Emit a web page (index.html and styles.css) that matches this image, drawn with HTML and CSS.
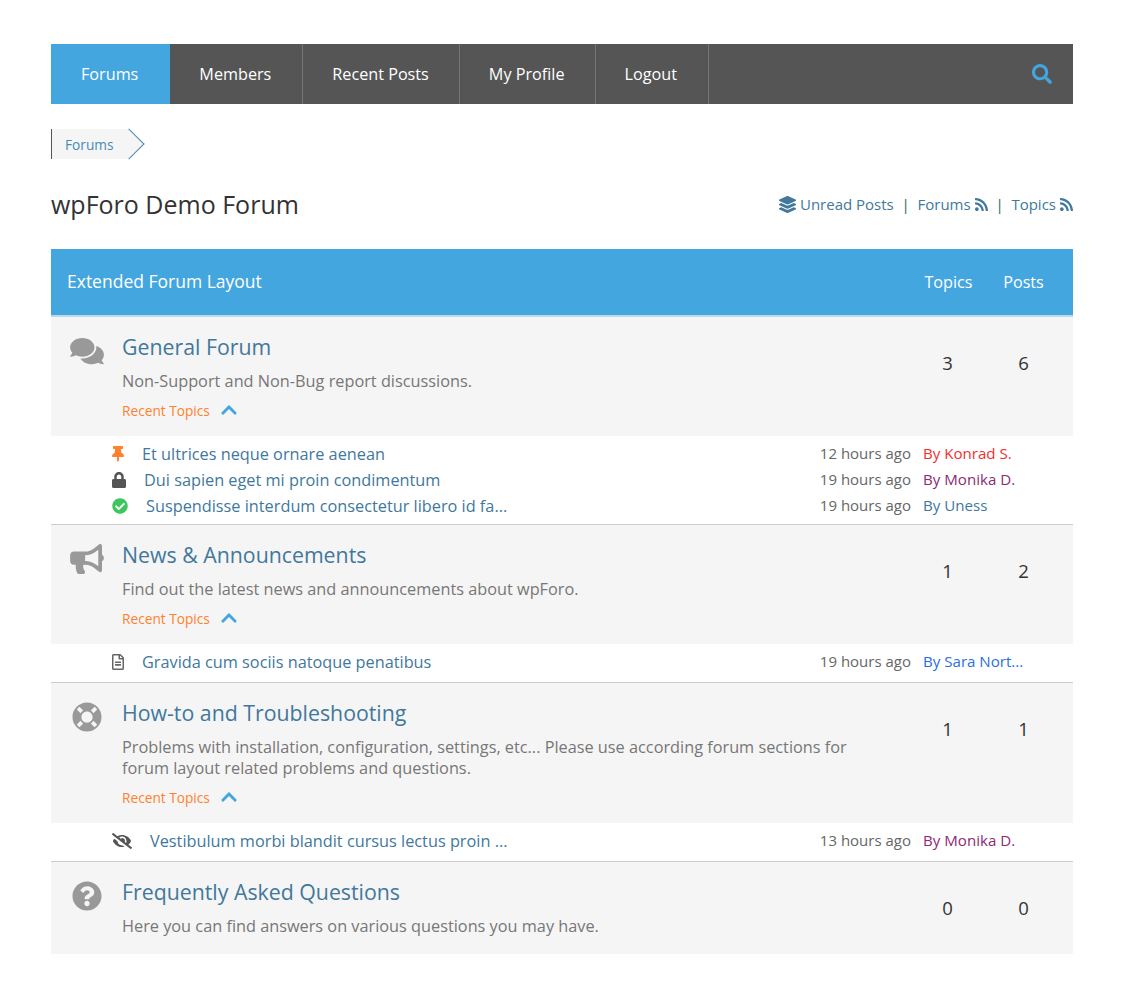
FILE: index.html
```html
<!DOCTYPE html>
<html lang="en">
<head>
    <meta charset="UTF-8">
    <meta name="viewport" content="width=device-width, initial-scale=1.0">
    <title>wpForo Demo Forum</title>
    <link rel="stylesheet" href="styles.css">
</head>
<body>
    <svg class="icon-defs" xmlns="http://www.w3.org/2000/svg">
        <symbol id="i-search" viewBox="0 0 512 512"><path d="M505 442.7L405.3 343c-4.5-4.5-10.6-7-17-7H372c27.6-35.3 44-79.7 44-128C416 93.1 322.9 0 208 0S0 93.1 0 208s93.1 208 208 208c48.3 0 92.7-16.4 128-44v16.3c0 6.4 2.5 12.5 7 17l99.7 99.7c9.4 9.4 24.6 9.4 33.9 0l28.3-28.3c9.4-9.4 9.4-24.6.1-34zM208 336c-70.7 0-128-57.2-128-128 0-70.7 57.2-128 128-128 70.7 0 128 57.2 128 128 0 70.7-57.2 128-128 128z"/></symbol>
        <symbol id="i-layers" viewBox="0 0 512 512"><path d="M12.41 148.02l232.94 105.67c6.8 3.09 14.49 3.09 21.29 0l232.94-105.67c16.55-7.51 16.55-32.52 0-40.03L266.65 2.31a25.607 25.607 0 0 0-21.29 0L12.41 107.98c-16.55 7.51-16.55 32.53 0 40.04zm487.18 88.28l-58.09-26.33-161.64 73.27c-7.56 3.43-15.59 5.17-23.86 5.17s-16.29-1.74-23.86-5.17L70.51 209.97l-58.1 26.33c-16.55 7.5-16.55 32.5 0 40l232.94 105.59c6.8 3.08 14.49 3.08 21.29 0L499.59 276.3c16.55-7.5 16.55-32.5 0-40zm0 127.8l-57.87-26.23-161.86 73.37c-7.56 3.43-15.59 5.17-23.86 5.17s-16.29-1.74-23.86-5.17L70.29 337.87 12.41 364.1c-16.55 7.5-16.55 32.5 0 40l232.94 105.59c6.8 3.08 14.49 3.08 21.29 0L499.59 404.1c16.55-7.5 16.55-32.5 0-40z"/></symbol>
        <symbol id="i-rss" viewBox="0 0 448 512"><path d="M128.081 415.959c0 35.369-28.672 64.041-64.041 64.041S0 451.328 0 415.959s28.672-64.041 64.041-64.041 64.04 28.673 64.04 64.041zm175.66 47.25c-8.354-154.6-132.185-278.587-286.95-286.95C7.656 175.765 0 183.105 0 192.253v48.069c0 8.415 6.49 15.472 14.887 16.018 111.832 7.284 201.473 96.702 208.772 208.772.547 8.397 7.604 14.887 16.018 14.887h48.069c9.149.001 16.489-7.655 15.995-16.79zm144.249.288C439.596 229.677 251.465 40.445 16.503 32.01 7.473 31.686 0 38.981 0 48.016v48.068c0 8.625 6.835 15.645 15.453 15.999 191.179 7.839 344.627 161.316 352.465 352.465.353 8.618 7.373 15.453 15.999 15.453h48.068c9.034-.001 16.329-7.474 16.005-16.504z"/></symbol>
        <symbol id="i-comments" viewBox="0 0 576 512"><path d="M416 192c0-88.4-93.1-160-208-160S0 103.6 0 192c0 34.3 14.1 65.9 38 92-13.4 30.2-35.5 54.2-35.8 54.5-2.2 2.3-2.8 5.7-1.5 8.7S4.8 352 8 352c36.6 0 66.9-12.3 88.7-25 32.2 15.7 70.3 25 111.3 25 114.9 0 208-71.6 208-160zm122 220c23.9-26 38-57.7 38-92 0-66.9-53.5-124.2-129.3-148.1.9 6.6 1.3 13.3 1.3 20.1 0 105.9-107.7 192-240 192-10.8 0-21.3-.8-31.7-1.9C207.8 439.6 281.8 480 368 480c41 0 79.1-9.2 111.3-25 21.8 12.7 52.1 25 88.7 25 3.2 0 6.1-1.9 7.3-4.8 1.3-2.9.7-6.3-1.5-8.7-.3-.3-22.4-24.2-35.8-54.5z"/></symbol>
        <symbol id="i-bullhorn" viewBox="0 0 576 512"><path d="M576 240c0-23.63-12.95-44.04-32-55.12V32.01C544 23.26 537.02 0 512 0c-7.12 0-14.19 2.38-19.98 7.02l-85.03 68.03C364.28 109.19 310.66 128 256 128H64c-35.35 0-64 28.65-64 64v96c0 35.35 28.65 64 64 64h33.7c-1.39 10.48-2.18 21.14-2.18 32 0 39.77 9.26 77.35 25.56 110.94 5.19 10.69 16.52 17.06 28.4 17.06h74.28c26.05 0 41.69-29.84 25.9-50.56-16.4-21.52-26.15-48.36-26.15-77.44 0-11.11 1.62-21.79 4.41-32H256c54.66 0 108.28 18.81 150.98 52.95l85.03 68.03a32.023 32.023 0 0 0 19.98 7.02c24.92 0 32-22.78 32-32V295.13C563.05 284.04 576 263.63 576 240zm-96 141.42l-33.05-26.44C392.95 311.78 325.12 288 256 288v-96c69.12 0 136.95-23.78 190.95-66.98L480 98.58v282.84z"/></symbol>
        <symbol id="i-lifering" viewBox="0 0 512 512"><path d="M256 8C119.033 8 8 119.033 8 256s111.033 248 248 248 248-111.033 248-248S392.967 8 256 8zm173.696 119.559l-63.399 63.399c-10.987-18.559-26.67-34.252-45.255-45.255l63.399-63.399a218.396 218.396 0 0 1 45.255 45.255zM256 352c-53.019 0-96-42.981-96-96s42.981-96 96-96 96 42.981 96 96-42.981 96-96 96zM127.559 82.304l63.399 63.399c-18.559 10.987-34.252 26.67-45.255 45.255l-63.399-63.399a218.372 218.372 0 0 1 45.255-45.255zM82.304 384.441l63.399-63.399c10.987 18.559 26.67 34.252 45.255 45.255l-63.399 63.399a218.396 218.396 0 0 1-45.255-45.255zm302.137 45.255l-63.399-63.399c18.559-10.987 34.252-26.67 45.255-45.255l63.399 63.399a218.403 218.403 0 0 1-45.255 45.255z"/></symbol>
        <symbol id="i-question" viewBox="0 0 512 512"><path d="M504 256c0 136.997-111.043 248-248 248S8 392.997 8 256C8 119.083 119.043 8 256 8s248 111.083 248 248zM262.655 90c-54.497 0-89.255 22.957-116.549 63.758-3.536 5.286-2.353 12.415 2.715 16.258l34.699 26.31c5.205 3.947 12.621 3.008 16.665-2.122 17.864-22.658 30.113-35.797 57.303-35.797 20.429 0 45.698 13.148 45.698 32.958 0 14.976-12.363 22.667-32.534 33.976C247.128 238.528 216 254.941 216 296v4c0 6.627 5.373 12 12 12h56c6.627 0 12-5.373 12-12v-1.333c0-28.462 83.186-29.647 83.186-106.667 0-58.002-60.165-102-116.531-102zM256 338c-25.365 0-46 20.635-46 46 0 25.364 20.635 46 46 46s46-20.636 46-46c0-25.365-20.635-46-46-46z"/></symbol>
        <symbol id="i-chevron" viewBox="0 0 448 512"><path d="M240.971 130.524l194.343 194.343c9.373 9.373 9.373 24.569 0 33.941l-22.667 22.667c-9.357 9.357-24.522 9.375-33.901.04L224 227.495 69.255 381.516c-9.379 9.335-24.544 9.317-33.901-.04l-22.667-22.667c-9.373-9.373-9.373-24.569 0-33.941L207.03 130.525c9.372-9.373 24.568-9.373 33.941-.001z"/></symbol>
        <symbol id="i-pin" viewBox="0 0 384 512"><path d="M298.028 214.267L285.793 96H328c13.255 0 24-10.745 24-24V24c0-13.255-10.745-24-24-24H56C42.745 0 32 10.745 32 24v48c0 13.255 10.745 24 24 24h42.207L85.972 214.267C37.465 236.82 0 277.261 0 328c0 13.255 10.745 24 24 24h136v104.007c0 1.242.289 2.467.845 3.578l24 48c2.941 5.882 11.364 5.893 14.311 0l24-48a8.008 8.008 0 0 0 .845-3.578V352h136c13.255 0 24-10.745 24-24-.001-51.183-37.983-91.42-85.973-113.733z"/></symbol>
        <symbol id="i-lock" viewBox="0 0 448 512"><path d="M400 224h-24v-72C376 68.2 307.8 0 224 0S72 68.2 72 152v72H48c-26.5 0-48 21.5-48 48v192c0 26.5 21.5 48 48 48h352c26.5 0 48-21.5 48-48V272c0-26.5-21.5-48-48-48zm-104 0H152v-72c0-39.7 32.3-72 72-72s72 32.3 72 72v72z"/></symbol>
        <symbol id="i-check" viewBox="0 0 512 512"><path d="M504 256c0 136.967-111.033 248-248 248S8 392.967 8 256 119.033 8 256 8s248 111.033 248 248zM227.314 387.314l184-184c6.248-6.248 6.248-16.379 0-22.627l-22.627-22.627c-6.248-6.249-16.379-6.249-22.628 0L216 308.118l-70.059-70.059c-6.248-6.248-16.379-6.248-22.628 0l-22.627 22.627c-6.248 6.248-6.248 16.379 0 22.627l104 104c6.249 6.249 16.379 6.249 22.628.001z"/></symbol>
        <symbol id="i-file" viewBox="0 0 384 512"><path d="M288 248v28c0 6.6-5.4 12-12 12H108c-6.6 0-12-5.4-12-12v-28c0-6.6 5.4-12 12-12h168c6.6 0 12 5.4 12 12zm-12 72H108c-6.6 0-12 5.4-12 12v28c0 6.6 5.4 12 12 12h168c6.6 0 12-5.4 12-12v-28c0-6.6-5.4-12-12-12zm108-188.1V464c0 26.5-21.5 48-48 48H48c-26.5 0-48-21.5-48-48V48C0 21.5 21.5 0 48 0h204.1C264.8 0 277 5.1 286 14.1L369.9 98c9 8.9 14.1 21.2 14.1 33.9zm-128-80V128h76.1L256 51.9zM336 464V176H232c-13.3 0-24-10.7-24-24V48H48v416h288z"/></symbol>
        <symbol id="i-eyeslash" viewBox="0 0 640 512"><path d="M320 400c-75.85 0-137.25-58.71-142.9-133.11L72.2 185.82c-13.79 17.3-26.48 35.59-36.72 55.59a32.35 32.35 0 0 0 0 29.19C89.71 376.41 197.07 448 320 448c26.91 0 52.87-4 77.89-10.46L346 397.39a144.13 144.13 0 0 1-26 2.61zm313.82 58.1l-110.55-85.44a331.25 331.25 0 0 0 81.25-102.07 32.35 32.35 0 0 0 0-29.19C550.29 135.59 442.93 64 320 64a308.15 308.15 0 0 0-147.32 37.7L45.46 3.37A16 16 0 0 0 23 6.18L3.37 31.45A16 16 0 0 0 6.18 53.9l588.36 454.73a16 16 0 0 0 22.46-2.81l19.64-25.27a16 16 0 0 0-2.82-22.45zm-183.72-142l-39.3-30.38A94.75 94.75 0 0 0 416 256a94.76 94.76 0 0 0-121.31-92.21A47.65 47.65 0 0 1 304 192a46.64 46.64 0 0 1-1.54 10l-73.61-56.89A142.31 142.31 0 0 1 320 112a143.92 143.92 0 0 1 144 144c0 21.63-5.29 41.79-13.9 60.11z"/></symbol>
    </svg>

    <div class="wrap">
        <nav class="menu">
            <a class="menu-item active" href="#">Forums</a>
            <a class="menu-item" href="#">Members</a>
            <a class="menu-item" href="#">Recent Posts</a>
            <a class="menu-item" href="#">My Profile</a>
            <a class="menu-item" href="#">Logout</a>
            <a class="menu-search" href="#"><svg class="ic"><use href="#i-search"/></svg></a>
        </nav>

        <div class="breadcrumb"><a href="#">Forums</a></div>

        <div class="page-head">
            <h1>wpForo Demo Forum</h1>
            <div class="feeds">
                <a href="#"><svg class="ic ic-layers"><use href="#i-layers"/></svg> Unread Posts</a>
                <span class="sep">|</span>
                <a href="#">Forums <svg class="ic ic-rss"><use href="#i-rss"/></svg></a>
                <span class="sep">|</span>
                <a href="#">Topics <svg class="ic ic-rss"><use href="#i-rss"/></svg></a>
            </div>
        </div>

        <div class="cat-head">
            <div class="cat-title">Extended Forum Layout</div>
            <div class="stat">Topics</div>
            <div class="stat">Posts</div>
        </div>

        <!-- General Forum -->
        <div class="forum">
            <svg class="ic forum-icon"><use href="#i-comments"/></svg>
            <div class="forum-body">
                <h3><a href="#">General Forum</a></h3>
                <p>Non-Support and Non-Bug report discussions.</p>
                <div class="recent">Recent Topics <svg class="ic"><use href="#i-chevron"/></svg></div>
            </div>
            <div class="stat">3</div>
            <div class="stat">6</div>
        </div>
        <ul class="topics">
            <li>
                <svg class="ic t-pin"><use href="#i-pin"/></svg>
                <a class="t-title" href="#">Et ultrices neque ornare aenean</a>
                <span class="t-time">12 hours ago</span>
                <span class="t-author red">By Konrad S.</span>
            </li>
            <li>
                <svg class="ic t-lock"><use href="#i-lock"/></svg>
                <a class="t-title" href="#">Dui sapien eget mi proin condimentum</a>
                <span class="t-time">19 hours ago</span>
                <span class="t-author purple">By Monika D.</span>
            </li>
            <li>
                <svg class="ic t-check"><use href="#i-check"/></svg>
                <a class="t-title" href="#">Suspendisse interdum consectetur libero id fa...</a>
                <span class="t-time">19 hours ago</span>
                <span class="t-author teal">By Uness</span>
            </li>
        </ul>

        <!-- News -->
        <div class="forum">
            <svg class="ic forum-icon"><use href="#i-bullhorn"/></svg>
            <div class="forum-body">
                <h3><a href="#">News &amp; Announcements</a></h3>
                <p>Find out the latest news and announcements about wpForo.</p>
                <div class="recent">Recent Topics <svg class="ic"><use href="#i-chevron"/></svg></div>
            </div>
            <div class="stat">1</div>
            <div class="stat">2</div>
        </div>
        <ul class="topics single">
            <li>
                <svg class="ic t-file"><use href="#i-file"/></svg>
                <a class="t-title" href="#">Gravida cum sociis natoque penatibus</a>
                <span class="t-time">19 hours ago</span>
                <span class="t-author blue">By Sara Nort...</span>
            </li>
        </ul>

        <!-- How-to -->
        <div class="forum">
            <svg class="ic forum-icon"><use href="#i-lifering"/></svg>
            <div class="forum-body">
                <h3><a href="#">How-to and Troubleshooting</a></h3>
                <p>Problems with installation, configuration, settings, etc... Please use according forum sections for forum layout related problems and questions.</p>
                <div class="recent">Recent Topics <svg class="ic"><use href="#i-chevron"/></svg></div>
            </div>
            <div class="stat">1</div>
            <div class="stat">1</div>
        </div>
        <ul class="topics single">
            <li>
                <svg class="ic t-eye"><use href="#i-eyeslash"/></svg>
                <a class="t-title" href="#">Vestibulum morbi blandit cursus lectus proin ...</a>
                <span class="t-time">13 hours ago</span>
                <span class="t-author purple">By Monika D.</span>
            </li>
        </ul>

        <!-- FAQ -->
        <div class="forum last">
            <svg class="ic forum-icon"><use href="#i-question"/></svg>
            <div class="forum-body">
                <h3><a href="#">Frequently Asked Questions</a></h3>
                <p>Here you can find answers on various questions you may have.</p>
            </div>
            <div class="stat">0</div>
            <div class="stat">0</div>
        </div>
    </div>
</body>
</html>
```

FILE: styles.css
```css
/* General Styles */
* {
    margin: 0;
    padding: 0;
    box-sizing: border-box;
}

body {
    background: #fff;
    font-family: "Open Sans", sans-serif;
    color: #333;
}

a {
    text-decoration: none;
    color: #41789c;
}

.icon-defs {
    display: none;
}

.ic {
    display: inline-block;
    width: 16px;
    height: 16px;
    fill: currentColor;
}

.wrap {
    width: 1022px;
    margin: 44px 0 0 51px;
}

/* Top menu */
.menu {
    display: flex;
    align-items: stretch;
    height: 60px;
    background: #555;
}

.menu-item {
    display: flex;
    align-items: center;
    padding: 0 30px 0 29px;
    border-right: 1px solid #757575;
    color: #fff;
    font-size: 16.2px;
}

.menu-item.active {
    background: #43a6df;
    padding: 0 32px 0 30px;
    border-right-color: #555;
}

.menu-item:nth-child(2) {
    padding: 0 31px 0 28px;
}

.menu-item:nth-child(5) {
    padding-right: 31px;
}

.menu-search {
    display: flex;
    align-items: center;
    margin-left: auto;
    padding-right: 21px;
    color: #43a6df;
}

.menu-search .ic {
    width: 20px;
    height: 20px;
}

/* Breadcrumb */
.breadcrumb {
    position: relative;
    display: flex;
    align-items: center;
    width: 78px;
    height: 30px;
    margin-top: 25px;
    padding-left: 13px;
    background: #f5f5f5;
    border-left: 1px solid #555;
    font-size: 13.7px;
}

.breadcrumb a {
    color: #4a8ab5;
}

.breadcrumb::after {
    content: "";
    position: absolute;
    top: 4px;
    left: 66px;
    width: 21px;
    height: 21px;
    background: #f5f5f5;
    border-top: 1px solid #4a8ab5;
    border-right: 1px solid #4a8ab5;
    transform: rotate(45deg);
}

/* Page heading */
.page-head {
    display: flex;
    justify-content: space-between;
    align-items: center;
    margin-top: 28px;
    height: 34px;
}

.page-head h1 {
    font-size: 25px;
    font-weight: 400;
    color: #333;
}

.feeds {
    display: flex;
    align-items: center;
    font-size: 15px;
}

.feeds a {
    display: flex;
    align-items: center;
    gap: 4px;
}

.feeds .sep {
    margin: 0 7.75px;
    color: #2d6a4f;
}

.ic-layers {
    width: 17px;
    height: 17px;
}

.ic-rss {
    width: 13px;
    height: 15px;
}

/* Category header */
.cat-head {
    display: flex;
    align-items: center;
    height: 68px;
    margin-top: 28px;
    padding-left: 16px;
    background: #43a6df;
    border-bottom: 2px solid #bcd7e8;
    color: #fff;
    font-size: 17.5px;
}

.cat-title {
    flex: 1;
    padding-bottom: 3px;
}

.stat {
    width: 75px;
    text-align: center;
}

.cat-head .stat {
    font-size: 16.2px;
}

.cat-head .stat:last-child {
    margin-right: 12px;
}

/* Forum row */
.forum {
    display: flex;
    align-items: flex-start;
    padding: 15px 12px 14px 19px;
    background: #f5f5f5;
}

.forum.last {
    padding-bottom: 17px;
}

.forum-icon {
    flex: none;
    width: 34px;
    height: 30px;
    margin: 3.5px 18px 0 0;
    color: #999;
}

.forum-body {
    flex: 1;
    padding-right: 49px;
}

.forum-body h3 {
    font-size: 21.3px;
    font-weight: 400;
    line-height: 30px;
}

.forum-body p {
    margin-top: 9px;
    font-size: 16.3px;
    line-height: 21px;
    color: #777;
}

.recent {
    display: flex;
    align-items: center;
    margin-top: 8px;
    font-size: 13.7px;
    line-height: 22px;
    color: #ff812d;
}

.recent .ic {
    width: 18px;
    height: 18px;
    margin: 0 0 2px 10px;
    color: #43a6df;
}

.forum > .stat {
    padding-top: 18px;
    font-size: 18.5px;
    color: #333;
}

.forum > .stat + .stat {
    margin-left: 1px;
}

/* Topic rows */
.topics {
    list-style: none;
    padding: 5px 50px 5px 61px;
    border-bottom: 1px solid #ccc;
}

.topics.single {
    padding-bottom: 7px;
}

.topics li {
    display: flex;
    align-items: center;
    gap: 18px;
    height: 26px;
    font-size: 16.3px;
}

.t-title {
    flex: 1;
}

.t-time {
    margin-bottom: 2px;
    font-size: 15px;
    color: #666;
}

.t-author {
    width: 100px;
    margin: 0 0 2px -6px;
    font-size: 15.1px;
    white-space: nowrap;
}

.t-pin { width: 12px; color: #ff812d; }
.t-lock { width: 14px; color: #555; }
.t-check { color: #3fc55e; }
.t-file { width: 12px; color: #666; }
.t-eye { width: 20px; color: #555; }

.red { color: #f0312e; }
.purple { color: #8e2a73; }
.teal { color: #41789c; }
.blue { color: #2a6fe0; }
```
